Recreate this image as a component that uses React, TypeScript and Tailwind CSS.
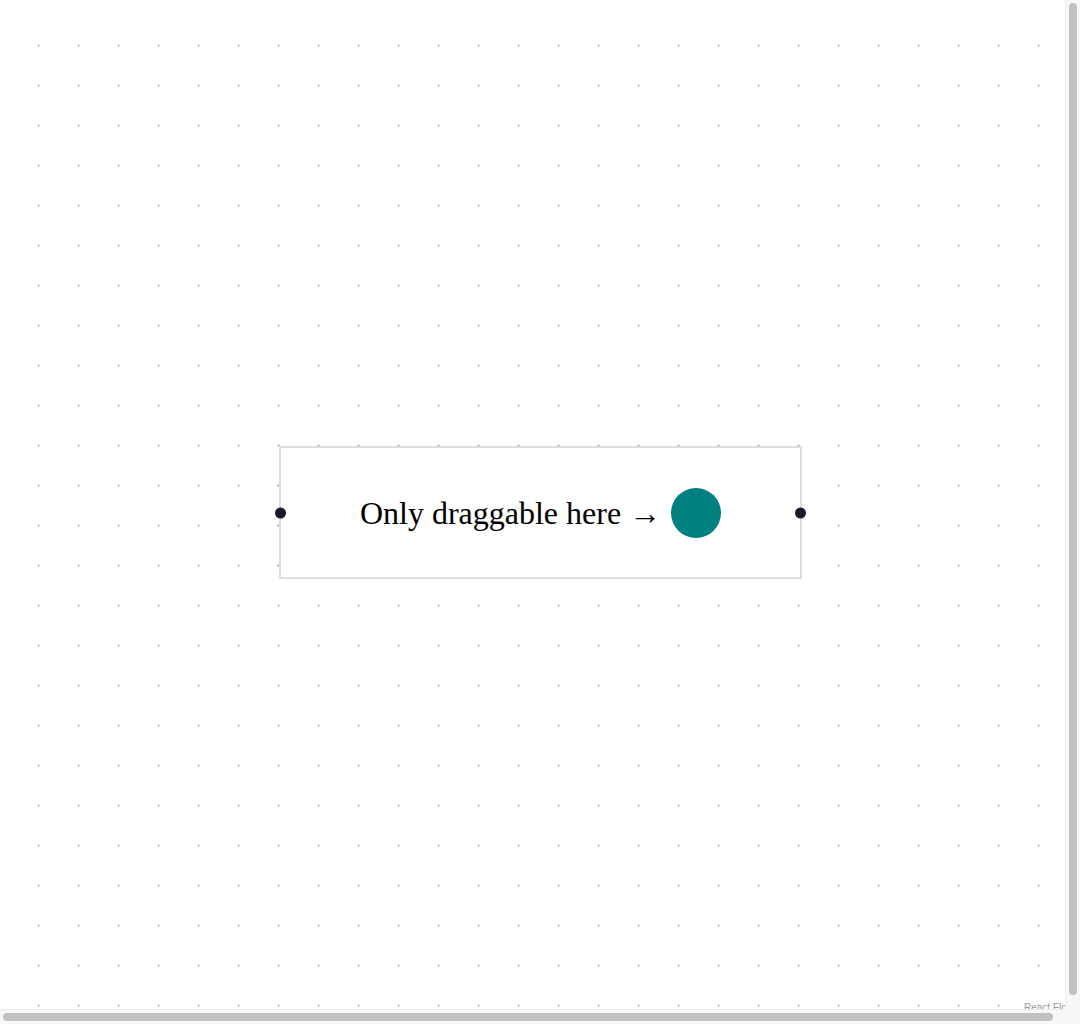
import React from "react";

export default function App() {
  return (
    <div className="w-[1080px] h-[1024px] overflow-hidden bg-white grid grid-cols-[1065px_15px] grid-rows-[1009px_15px]">
      {/* viewport */}
      <div className="overflow-hidden">
        <div className="relative w-[1080px] h-[1019px] overflow-hidden bg-white">
          <svg className="absolute inset-0 w-full h-full" aria-hidden="true">
            <defs>
              <pattern id="dots" x="0" y="0" width="40" height="40" patternUnits="userSpaceOnUse">
                <circle cx="38.5" cy="5.5" r="1" fill="#9d9da5" />
              </pattern>
            </defs>
            <rect x="0" y="25" width="100%" height="100%" fill="url(#dots)" />
          </svg>

          {/* node on the free canvas */}
          <div className="absolute left-[279px] top-[446px] w-[523px] h-[133px] border-2 border-[#dddddd] bg-white flex items-center justify-center gap-[10px]">
            <span className="text-[32px] leading-none text-black font-['Times_New_Roman','Liberation_Serif',serif] whitespace-nowrap">
              Only draggable here →
            </span>
            <div className="w-[50px] h-[50px] rounded-full bg-[#008080] shrink-0" />
            <div className="absolute left-[-6px] top-1/2 -translate-y-1/2 w-[11px] h-[11px] rounded-full bg-[#1a192b]" />
            <div className="absolute right-[-6px] top-1/2 -translate-y-1/2 w-[11px] h-[11px] rounded-full bg-[#1a192b]" />
          </div>

          <div className="absolute right-[2px] bottom-[3px] px-1 py-[2px] text-[10px] leading-[12px] text-[#999] bg-white/50 font-['Liberation_Sans',sans-serif]">
            React Flow
          </div>
        </div>
      </div>

      {/* vertical scrollbar */}
      <div className="bg-[#f7f7f7] border-l border-[#ececec] flex justify-center pt-[3px]">
        <div className="w-[8px] h-[992px] rounded-full bg-[#c1c1c1]" />
      </div>

      {/* horizontal scrollbar */}
      <div className="bg-[#f7f7f7] border-t border-[#ececec] flex items-center pl-[3px]">
        <div className="h-[8px] w-[1050px] rounded-full bg-[#c1c1c1]" />
      </div>

      {/* corner */}
      <div className="bg-[#f7f7f7]" />
    </div>
  );
}
